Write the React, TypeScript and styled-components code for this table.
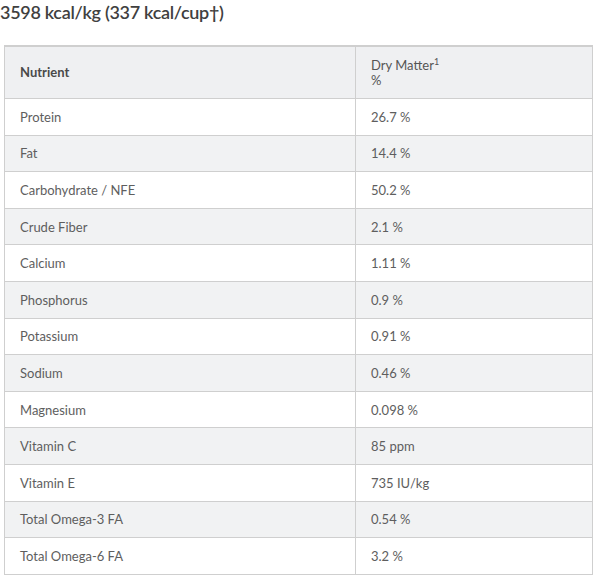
import React from "react";
import styled, { createGlobalStyle } from "styled-components";

const Global = createGlobalStyle`
  html, body { margin: 0; padding: 0; background: #ffffff; }
  body { font-family: Lato, "Open Sans", sans-serif; }
`;

const Page = styled.div`
  width: 600px;
  height: 583px;
  box-sizing: border-box;
  padding: 0 7px 0 4px;
  background: #fff;
`;

const Title = styled.h2`
  margin: 0 0 0 -4px;
  height: 45px;
  padding-top: 1px;
  box-sizing: border-box;
  font-family: Lato, sans-serif;
  font-size: 18px;
  font-weight: 600;
  letter-spacing: -0.3px;
  color: #404040;
  line-height: 22px;
`;

const Table = styled.table`
  width: 589px;
  border-collapse: collapse;
  border: 1px solid #cfcfcf;
  font-family: Lato, sans-serif;
  font-size: 13px;
  color: #555;
`;

const Row = styled.tr<{ $shade: boolean }>`
  background: ${(p) => (p.$shade ? "#f1f2f3" : "#ffffff")};
`;

const HeadCell = styled.th<{ $w?: number; $bold?: boolean }>`
  text-align: left;
  font-weight: ${(p) => (p.$bold ? 700 : 400)};
  color: ${(p) => (p.$bold ? "#4a4a4a" : "#555")};
  height: 51px;
  padding: 0 15px;
  border: 1px solid #cfcfcf;
  border-top-width: 2px;
  line-height: 15px;
  width: ${(p) => (p.$w ? `${p.$w}px` : "auto")};
  background: #eff0f2;
`;

const HeadUnit = styled.span`
  display: block;
`;

const Sup = styled.sup`
  font-size: 9px;
  line-height: 0;
  vertical-align: 5px;
`;

const Cell = styled.td`
  height: 35.6px;
  padding: 0 15px;
  border: 1px solid #cfcfcf;
  font-weight: 400;
  color: #5e5e5e;
`;

const rows: [string, string][] = [
  ["Protein", "26.7 %"],
  ["Fat", "14.4 %"],
  ["Carbohydrate / NFE", "50.2 %"],
  ["Crude Fiber", "2.1 %"],
  ["Calcium", "1.11 %"],
  ["Phosphorus", "0.9 %"],
  ["Potassium", "0.91 %"],
  ["Sodium", "0.46 %"],
  ["Magnesium", "0.098 %"],
  ["Vitamin C", "85 ppm"],
  ["Vitamin E", "735 IU/kg"],
  ["Total Omega-3 FA", "0.54 %"],
  ["Total Omega-6 FA", "3.2 %"],
];

export default function App() {
  return (
    <Page>
      <Global />
      <Title>3598 kcal/kg (337 kcal/cup†)</Title>
      <Table>
        <thead>
          <tr>
            <HeadCell $w={320} $bold>
              Nutrient
            </HeadCell>
            <HeadCell>
              Dry Matter<Sup>1</Sup>
              <HeadUnit>%</HeadUnit>
            </HeadCell>
          </tr>
        </thead>
        <tbody>
          {rows.map(([n, v], i) => (
            <Row key={n} $shade={i % 2 === 1}>
              <Cell>{n}</Cell>
              <Cell>{v}</Cell>
            </Row>
          ))}
        </tbody>
      </Table>
    </Page>
  );
}
